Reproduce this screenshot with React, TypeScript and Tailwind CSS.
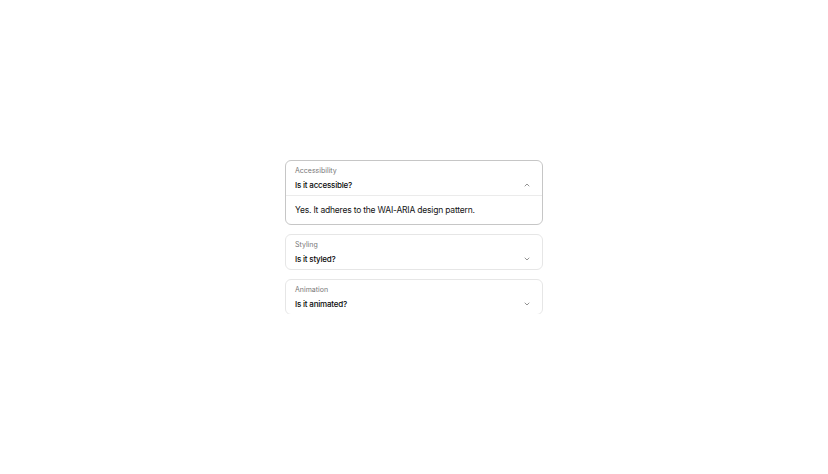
import React, { useState } from 'react';

const items = [
  { id: 'a11y', label: 'Accessibility', title: 'Is it accessible?', body: 'Yes. It adheres to the WAI-ARIA design pattern.' },
  { id: 'style', label: 'Styling', title: 'Is it styled?', body: 'Yes. It comes with default styles that you can override.' },
  { id: 'anim', label: 'Animation', title: 'Is it animated?', body: 'Yes. It is animated by default, but you can disable it.' },
];

function Chevron({ open }: { open: boolean }) {
  return (
    <svg
      width="8"
      height="8"
      viewBox="0 0 24 24"
      fill="none"
      stroke="currentColor"
      strokeWidth="2.5"
      strokeLinecap="round"
      strokeLinejoin="round"
      className={open ? 'rotate-180 text-[#7d7d7d]' : 'text-[#7d7d7d]'}
    >
      <path d="m6 9 6 6 6-6" />
    </svg>
  );
}

export default function App() {
  const [openId, setOpenId] = useState<string | null>('a11y');

  return (
    <div
      className="flex h-screen w-full items-center justify-center bg-white"
      style={{ fontFamily: 'Inter, "Noto Sans", sans-serif' }}
    >
      {/* list is clipped at the bottom, like in the demo */}
      <div className="flex h-[154px] w-[258px] flex-col gap-[9px] overflow-hidden">
        {items.map((item) => {
          const open = openId === item.id;
          return (
            <div
              key={item.id}
              className={
                open
                  ? 'shrink-0 rounded-[6px] border border-[#c6c6c6] bg-white'
                  : 'shrink-0 rounded-[6px] border border-[#e6e6e6] bg-white'
              }
            >
              <button
                type="button"
                onClick={() => setOpenId(open ? null : item.id)}
                className="flex w-full items-end justify-between pl-[9px] pr-[11px] pt-[2px] pb-[2px] text-left"
              >
                <div className="flex flex-col">
                  <span className="h-[15px] text-[7px] leading-[15px] text-[#777777]">{item.label}</span>
                  <span className="h-[15px] text-[8px] font-medium leading-[15px] tracking-[-0.2px] text-[#0a0a0a]">{item.title}</span>
                </div>
                <span className="mb-[4px]">
                  <Chevron open={open} />
                </span>
              </button>
              {open && (
                <div className="border-t border-[#ebebeb] pl-[9px] pr-[11px] pt-[4px] pb-[4px] text-[8.5px] leading-[20px] tracking-[-0.2px] text-[#141414]">
                  {item.body}
                </div>
              )}
            </div>
          );
        })}
      </div>
    </div>
  );
}
